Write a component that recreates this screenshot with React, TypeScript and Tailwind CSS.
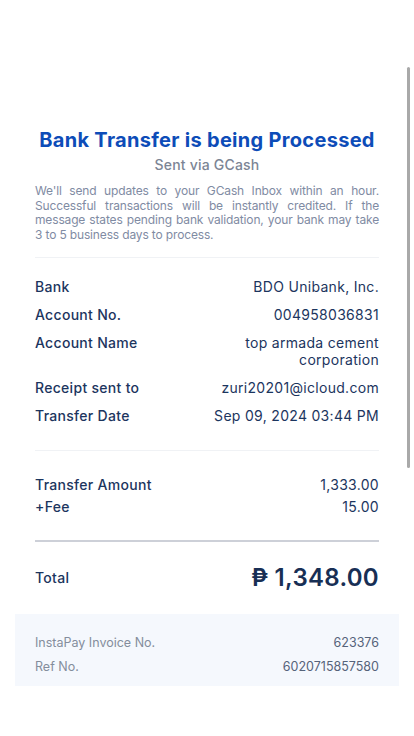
import React from 'react';

const details = [
  { label: 'Bank', value: 'BDO Unibank, Inc.' },
  { label: 'Account No.', value: '004958036831' },
  { label: 'Account Name', value: 'top armada cement corporation' },
  { label: 'Receipt sent to', value: 'zuri20201@icloud.com' },
  { label: 'Transfer Date', value: 'Sep 09, 2024 03:44 PM' },
];

export default function App() {
  return (
    <div
      className="relative min-h-[736px] w-full bg-white"
      style={{ fontFamily: 'Inter, "Open Sans", sans-serif' }}
    >
      {/* scroll indicator */}
      <div className="absolute right-[4px] top-[67px] h-[401px] w-[3px] rounded-full bg-[#a9a9a9]" />

      <div className="px-[35px] pt-[127px]">
        <h1 className="text-center text-[20px] font-bold leading-[26px] tracking-[0.3px] text-[#0d4cb8]">
          Bank Transfer is being Processed
        </h1>
        <p className="mt-[2px] text-center text-[14px] font-medium leading-[20px] tracking-[0.2px] text-[#7c8595]">
          Sent via GCash
        </p>
        <p className="mt-[9px] text-justify text-[12px] leading-[14.7px] tracking-[-0.15px] text-[#7f8ba3] [text-align-last:left]">
          We'll send updates to your GCash Inbox within an hour. Successful transactions will be instantly
          credited. If the message states pending bank validation, your bank may take 3 to 5 business days to
          process.
        </p>

        <div className="mt-[14px] h-px bg-[#f0f2f5]" />

        <div className="flex flex-col gap-[11px] pt-[20px] pb-[26px] text-[14px] leading-[17px] tracking-[0.3px] text-[#1c355e]">
          {details.map(d => (
            <div key={d.label} className="flex justify-between gap-6">
              <span className="shrink-0 font-medium">{d.label}</span>
              <span className="max-w-[180px] text-right">{d.value}</span>
            </div>
          ))}
        </div>

        <div className="h-px bg-[#f0f2f5]" />

        <div className="flex flex-col gap-[3px] pt-[24px] pb-[24px] text-[14px] leading-[19px] tracking-[0.3px] text-[#1c355e]">
          <div className="flex justify-between">
            <span className="font-medium">Transfer Amount</span>
            <span>1,333.00</span>
          </div>
          <div className="flex justify-between">
            <span className="font-medium">+Fee</span>
            <span>15.00</span>
          </div>
        </div>

        <div className="h-[2px] bg-[#cdd0d8]" />

        <div className="flex items-center justify-between pt-[20px] pb-[20px] text-[#1c355e]">
          <span className="text-[14px] font-medium tracking-[0.3px]">Total</span>
          <span className="text-[24px] font-semibold leading-[32px] tracking-[0.3px] text-[#182f55]">₱ 1,348.00</span>
        </div>
      </div>

      <div className="mx-[15px] flex flex-col gap-[5px] bg-[#f5f8fd] px-[20px] pt-[19px] pb-[10px] text-[12.5px] leading-[19px] text-[#848d9c]">
        <div className="flex justify-between">
          <span>InstaPay Invoice No.</span>
          <span className="text-[#56637a]">623376</span>
        </div>
        <div className="flex justify-between">
          <span>Ref No.</span>
          <span className="text-[#56637a]">6020715857580</span>
        </div>
      </div>
    </div>
  );
}
